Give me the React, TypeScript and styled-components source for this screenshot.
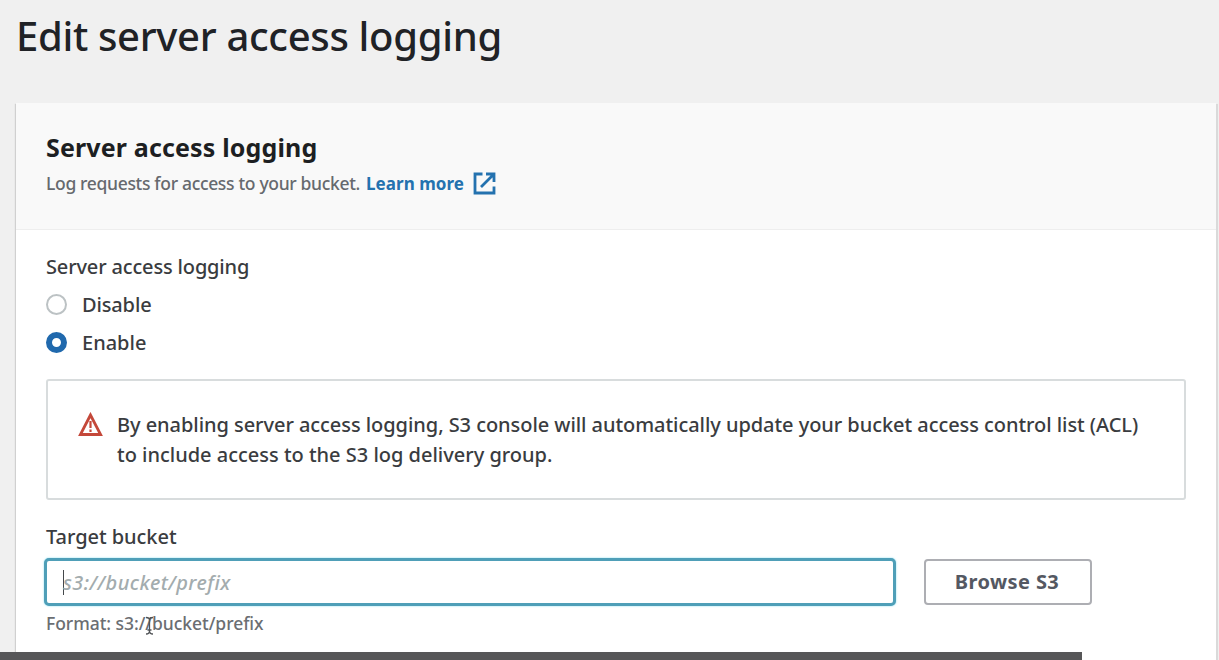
import React from "react";
import styled, { createGlobalStyle } from "styled-components";

const GlobalStyle = createGlobalStyle`
  * { box-sizing: border-box; }
  body { margin: 0; background: #f0f0f0; font-family: "Noto Sans", "Open Sans", sans-serif; color: #3a3c40; }
  h1, h2, p { margin: 0; }
`;

const Page = styled.div`
  position: relative;
  height: 660px;
  overflow: hidden;
  padding: 0 3px 0 16px;
`;

const Text = styled.span<{ $size: number; $track?: number; $weight?: number; $color?: string }>`
  font-size: ${(p) => p.$size}px;
  letter-spacing: ${(p) => p.$track ?? 0}px;
  font-weight: ${(p) => p.$weight ?? 500};
  color: ${(p) => p.$color ?? "inherit"};
  white-space: nowrap;
`;

const PageTitle = styled(Text)`
  display: block;
  height: 103px;
  line-height: 72px;
`;

const Panel = styled.section`
  height: 600px;
  background: #fff;
  box-shadow: -1px 1px 1px #d0d0d0, 2px 1px 0 #dadada;
`;

const PanelHeader = styled.header`
  height: 127px;
  padding: 26px 30px 0;
  background: #f9f9f9;
  border-bottom: 1px solid #eeeeee;
`;

const PanelTitle = styled(Text)`
  display: block;
  line-height: 36px;
`;

const Description = styled.p`
  display: flex;
  align-items: center;
  height: 36px;
`;

const LearnMore = styled.a`
  display: flex;
  align-items: center;
  gap: 9px;
  margin-left: 6px;
  color: #2472af;
`;

const PanelBody = styled.div`
  padding: 19px 30px 0;
`;

const Label = styled(Text)`
  display: block;
  line-height: 36px;
`;

const Option = styled.label`
  display: flex;
  align-items: center;
  gap: 15px;
  height: 38px;
`;

const Radio = styled.span<{ $checked?: boolean }>`
  width: 21px;
  height: 21px;
  border-radius: 50%;
  border: ${(p) => (p.$checked ? "6.5px solid #2069ad" : "2px solid #bcc2c4")};
  background: #fff;
`;

const Alert = styled.div`
  display: flex;
  gap: 14px;
  height: 121px;
  margin-top: 18px;
  padding: 29px 30px;
  border: 2px solid #d8dcdd;
  border-radius: 3px;
`;

const AlertIcon = styled.svg`
  flex: none;
  margin-top: 2px;
`;

const AlertLines = styled.div`
  display: flex;
  flex-direction: column;
  line-height: 30px;
`;

const Field = styled.div`
  margin-top: 19px;
`;

const FieldRow = styled.div`
  display: flex;
  align-items: center;
  gap: 28px;
  height: 48px;
  margin: 3px 0 0 -2px;
`;

const Input = styled.div`
  display: flex;
  align-items: center;
  width: 852px;
  height: 48px;
  padding-left: 16px;
  border: 3px solid #4f9fb8;
  border-radius: 5px;
  box-shadow: 0 0 2px #7fdcf0;
  background: #fff;
`;

const Caret = styled.span`
  width: 1px;
  height: 25px;
  margin-right: -1px;
  background: #44484b;
`;

const Placeholder = styled(Text)`
  font-style: italic;
`;

const Button = styled.button`
  width: 168px;
  height: 46px;
  padding: 0 2px 2px 0;
  border: 2px solid #adaeb3;
  border-radius: 4px;
  background: #fff;
  font-family: inherit;
  color: #545862;
`;

const Hint = styled.div`
  position: relative;
  line-height: 34px;
`;

const Pointer = styled.svg`
  position: absolute;
  left: 99px;
  top: 10px;
`;

const BottomBar = styled.div`
  position: absolute;
  left: 0;
  bottom: 0;
  width: 1082px;
  height: 8px;
  background: #565658;
`;

export default function App() {
  return (
    <>
      <GlobalStyle />
      <Page>
        <PageTitle as="h1" $size={40} $track={-0.32} $color="#202226">Edit server access logging</PageTitle>
        <Panel>
          <PanelHeader>
            <PanelTitle as="h2" $size={25} $track={0.15} $weight={700} $color="#1d1f22">Server access logging</PanelTitle>
            <Description>
              <Text $size={17.5} $track={-0.33} $color="#66696e">Log requests for access to your bucket.</Text>
              <LearnMore>
                <Text $size={17} $track={0.05} $weight={700}>Learn more</Text>
                <svg width="23" height="23" viewBox="0 0 23 23" fill="none" stroke="currentColor" strokeWidth="2.8">
                  <path d="M9.500 2H2v19h19v-6.500M13 2h8v8M21 2L8 15" />
                </svg>
              </LearnMore>
            </Description>
          </PanelHeader>
          <PanelBody>
            <Label $size={20} $track={-0.16}>Server access logging</Label>
            <Option><Radio /><Text $size={20} $track={-0.14}>Disable</Text></Option>
            <Option><Radio $checked /><Text $size={20} $track={0}>Enable</Text></Option>
            <Alert>
              <AlertIcon width="25" height="25" viewBox="0 0 25 25" fill="none" stroke="#c4483a" strokeWidth="2.8">
                <path d="M12.5 3L2.4 22.5h20.2z" />
                <path d="M12.5 9v7M12.5 17.5v2.5" strokeWidth="2.2" />
              </AlertIcon>
              <AlertLines>
                <Text $size={20} $track={-0.055}>By enabling server access logging, S3 console will automatically update your bucket access control list (ACL)</Text>
                <Text $size={20} $track={-0.01}>to include access to the S3 log delivery group.</Text>
              </AlertLines>
            </Alert>
            <Field>
              <Label $size={20} $track={-0.05}>Target bucket</Label>
              <FieldRow>
                <Input>
                  <Caret />
                  <Placeholder $size={20} $track={0.45} $color="#a3acae">s3://bucket/prefix</Placeholder>
                </Input>
                <Button><Text $size={20} $track={0.4} $weight={700}>Browse S3</Text></Button>
              </FieldRow>
              <Hint>
                <Text $size={17.5} $track={-0.05} $color="#6b6e72">Format: s3://bucket/prefix</Text>
                <Pointer width="9" height="20" viewBox="0 0 9 20" fill="none" stroke="#505356" strokeWidth="1.3">
                  <path d="M1 1.500q3.500 0 3.500 2.500v11q0 3-3.500 3M8 1.500q-3.500 0-3.500 2.500v11q0 3 3.500 3M2.500 14h4" />
                </Pointer>
              </Hint>
            </Field>
          </PanelBody>
        </Panel>
        <BottomBar />
      </Page>
    </>
  );
}
